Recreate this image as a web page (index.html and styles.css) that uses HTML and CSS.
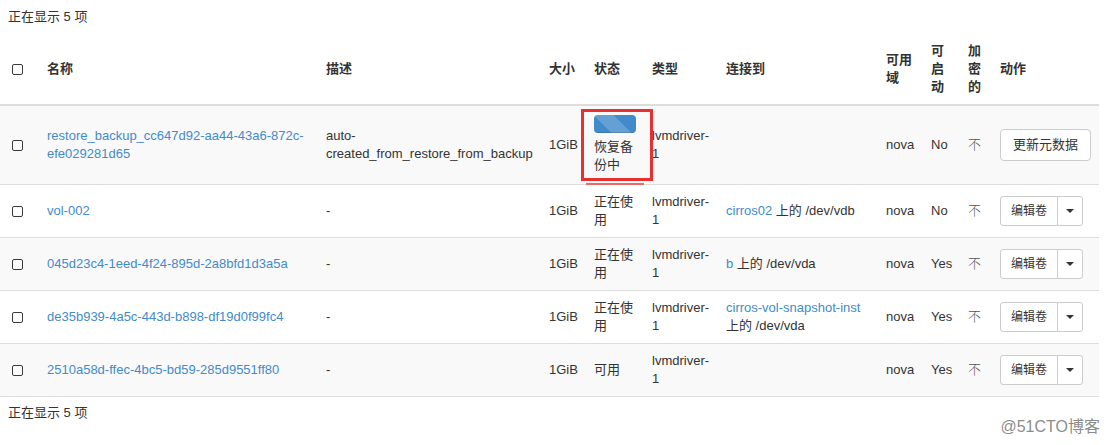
FILE: index.html
```html
<!DOCTYPE html>
<html>
<head>
  <title>卷</title>
  <meta charset="utf-8">
  <link rel="stylesheet" href="styles.css">
</head>
<body>
  <div class="page">
    <div class="summary">正在显示 5 项</div>

    <table class="volumes">
      <colgroup>
        <col class="w-check">
        <col class="w-name">
        <col class="w-desc">
        <col class="w-size">
        <col class="w-status">
        <col class="w-type">
        <col class="w-attach">
        <col class="w-zone">
        <col class="w-boot">
        <col class="w-enc">
        <col class="w-actions">
      </colgroup>
      <thead>
        <tr>
          <th class="cell-check"><input type="checkbox" class="check"></th>
          <th>名称</th>
          <th>描述</th>
          <th>大小</th>
          <th>状态</th>
          <th>类型</th>
          <th>连接到</th>
          <th>可用域</th>
          <th>可启动</th>
          <th>加密的</th>
          <th>动作</th>
        </tr>
      </thead>
      <tbody>
        <tr>
          <td class="cell-check"><input type="checkbox" class="check"></td>
          <td><a href="#">restore_backup_cc647d92-aa44-43a6-872c-efe029281d65</a></td>
          <td>auto-created_from_restore_from_backup</td>
          <td>1GiB</td>
          <td>
            <div class="status-box">
              <div class="progress"><div class="progress-bar"></div></div>
              <div class="status-text">恢复备份中</div>
              <div class="mark"></div>
              <div class="mark-line"></div>
            </div>
          </td>
          <td>lvmdriver-1</td>
          <td></td>
          <td>nova</td>
          <td class="nowrap">No</td>
          <td class="thin">不</td>
          <td><button class="btn">更新元数据</button></td>
        </tr>
        <tr>
          <td class="cell-check"><input type="checkbox" class="check"></td>
          <td><a href="#">vol-002</a></td>
          <td>-</td>
          <td>1GiB</td>
          <td>正在使用</td>
          <td>lvmdriver-1</td>
          <td><a href="#">cirros02</a> 上的 /dev/vdb</td>
          <td>nova</td>
          <td class="nowrap">No</td>
          <td class="thin">不</td>
          <td>
            <div class="btn-group">
              <button class="btn btn-sm">编辑卷</button>
              <button class="btn btn-sm toggle"><span class="caret"></span></button>
            </div>
          </td>
        </tr>
        <tr>
          <td class="cell-check"><input type="checkbox" class="check"></td>
          <td><a href="#">045d23c4-1eed-4f24-895d-2a8bfd1d3a5a</a></td>
          <td>-</td>
          <td>1GiB</td>
          <td>正在使用</td>
          <td>lvmdriver-1</td>
          <td><a href="#">b</a> 上的 /dev/vda</td>
          <td>nova</td>
          <td class="nowrap">Yes</td>
          <td class="thin">不</td>
          <td>
            <div class="btn-group">
              <button class="btn btn-sm">编辑卷</button>
              <button class="btn btn-sm toggle"><span class="caret"></span></button>
            </div>
          </td>
        </tr>
        <tr>
          <td class="cell-check"><input type="checkbox" class="check"></td>
          <td><a href="#">de35b939-4a5c-443d-b898-df19d0f99fc4</a></td>
          <td>-</td>
          <td>1GiB</td>
          <td>正在使用</td>
          <td>lvmdriver-1</td>
          <td><a href="#">cirros-vol-snapshot-inst</a> 上的 /dev/vda</td>
          <td>nova</td>
          <td class="nowrap">Yes</td>
          <td class="thin">不</td>
          <td>
            <div class="btn-group">
              <button class="btn btn-sm">编辑卷</button>
              <button class="btn btn-sm toggle"><span class="caret"></span></button>
            </div>
          </td>
        </tr>
        <tr>
          <td class="cell-check"><input type="checkbox" class="check"></td>
          <td><a href="#">2510a58d-ffec-4bc5-bd59-285d9551ff80</a></td>
          <td>-</td>
          <td>1GiB</td>
          <td>可用</td>
          <td>lvmdriver-1</td>
          <td></td>
          <td>nova</td>
          <td class="nowrap">Yes</td>
          <td class="thin">不</td>
          <td>
            <div class="btn-group">
              <button class="btn btn-sm">编辑卷</button>
              <button class="btn btn-sm toggle"><span class="caret"></span></button>
            </div>
          </td>
        </tr>
      </tbody>
    </table>

    <div class="summary summary-bottom">正在显示 5 项</div>
    <div class="watermark">@51CTO博客</div>
  </div>
</body>
</html>
```

FILE: styles.css
```css
* {
  margin: 0;
  padding: 0;
  box-sizing: border-box;
}

body {
  font-family: 'Liberation Sans', Arial, 'Noto Sans CJK SC', sans-serif;
  font-size: 13px;
  line-height: 18px;
  color: #333;
  background: #fff;
}

.page {
  position: relative;
  width: 1112px;
  height: 445px;
  overflow: hidden;
}

.summary {
  padding: 8px 8px;
}

.summary-bottom {
  padding-top: 7px;
}

.volumes {
  width: 1099px;
  table-layout: fixed;
  border-collapse: collapse;
}

.w-check { width: 39px; }
.w-name { width: 279px; }
.w-desc { width: 223px; }
.w-size { width: 45px; }
.w-status { width: 58px; }
.w-type { width: 74px; }
.w-attach { width: 160px; }
.w-zone { width: 45px; }
.w-boot { width: 37px; }
.w-enc { width: 32px; }
.w-actions { width: 107px; }

.volumes th,
.volumes td {
  padding: 8px;
  text-align: left;
  vertical-align: middle;
  word-wrap: break-word;
}

.volumes th {
  font-weight: bold;
  border-bottom: 2px solid #ddd;
}

.volumes td {
  border-top: 1px solid #ddd;
}

.volumes tbody tr:last-child td {
  border-bottom: 1px solid #ddd;
}

.volumes tbody tr:nth-child(odd) td {
  background: #f9f9f9;
}

.volumes td.nowrap {
  white-space: nowrap;
  overflow: visible;
}

.cell-check {
  text-align: center !important;
  padding-left: 6px !important;
}

.check {
  -webkit-appearance: none;
  appearance: none;
  display: block;
  width: 11px;
  height: 11px;
  margin: 0 auto 0 6px;
  border: 1.5px solid #3a3a3a;
  border-radius: 2px;
  background: #fff;
}

a {
  color: #428bca;
  text-decoration: none;
}

.thin {
  color: #555;
  font-weight: 300;
}

/* status cell with the progress bar */
.status-box {
  position: relative;
  padding-bottom: 2px;
}

.progress {
  height: 18px;
  margin: 1px 0 5px;
  border-radius: 4px;
  overflow: hidden;
  background: #f5f5f5;
}

.progress-bar {
  width: 100%;
  height: 100%;
  background-color: #428bca;
  background-image: linear-gradient(45deg, rgba(255,255,255,.18) 25%, transparent 25%, transparent 50%, rgba(255,255,255,.18) 50%, rgba(255,255,255,.18) 75%, transparent 75%, transparent);
  background-size: 40px 40px;
  box-shadow: inset 0 -1px 0 rgba(0,0,0,.15);
}

/* red annotation drawn over the screenshot */
.mark {
  position: absolute;
  left: -13px;
  top: -6px;
  width: 72px;
  height: 72px;
  border: 3px solid #e8302f;
}

.mark-line {
  position: absolute;
  left: -8px;
  top: 68px;
  width: 58px;
  height: 2px;
  background: #ec6b6a;
}

/* buttons */
.btn {
  display: inline-block;
  font-family: inherit;
  font-size: 13px;
  line-height: 18px;
  padding: 6px 12px;
  color: #333;
  background: #fff;
  border: 1px solid #ccc;
  border-radius: 4px;
  cursor: pointer;
  white-space: nowrap;
}

.btn-sm {
  font-size: 12px;
  padding: 5px 10px;
  border-radius: 3px;
}

.btn-group {
  display: inline-flex;
}

.btn-group .btn:first-child {
  border-top-right-radius: 0;
  border-bottom-right-radius: 0;
}

.btn-group .toggle {
  margin-left: -1px;
  padding: 5px 8px;
  border-top-left-radius: 0;
  border-bottom-left-radius: 0;
  display: flex;
  align-items: center;
}

.caret {
  display: inline-block;
  width: 0;
  height: 0;
  border-top: 4px solid #333;
  border-left: 4px solid transparent;
  border-right: 4px solid transparent;
}

.watermark {
  position: absolute;
  right: 12px;
  bottom: 9px;
  font-size: 16px;
  line-height: 18px;
  color: #8c8c8c;
  text-shadow: 0 0 1px #fff;
}
```
